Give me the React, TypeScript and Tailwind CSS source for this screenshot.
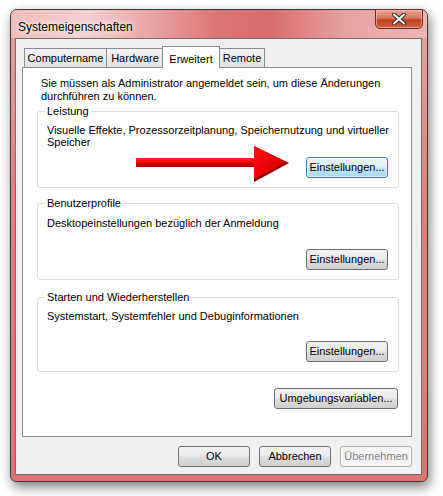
import type { ReactNode } from "react"

const font = { fontFamily: '"Liberation Sans", Arial, sans-serif' }

function Btn({ children, w, focused, disabled }: { children: ReactNode; w: string; focused?: boolean; disabled?: boolean }) {
  let cls = "border-[#707070] bg-[linear-gradient(#f2f2f2_0%,#ebebeb_48%,#dddddd_52%,#cfcfcf_100%)] text-black"
  if (focused) cls = "border-[#3c7fb1] bg-[linear-gradient(#eaf6fd_0%,#d9f0fc_48%,#bee6fd_52%,#a7d9f5_100%)] text-black shadow-[inset_0_0_0_1px_rgba(255,255,255,0.6)]"
  if (disabled) cls = "border-[#adb2b5] bg-[#f4f4f4] text-[#838383]"
  return (
    <div className={`${w} h-[21px] flex items-center justify-center whitespace-nowrap rounded-[3px] border ${cls}`}>
      {children}
    </div>
  )
}

function Group({ label, h, pt, children }: { label: string; h: string; pt: string; children: ReactNode }) {
  return (
    <div className={`relative w-[362px] ${h} rounded-[3px] border border-[#d5dfe5] flex flex-col pl-[9px] pr-[10px] pb-[9px] ${pt}`}>
      <span className="absolute left-[7px] -top-[7px] px-[2px] bg-white leading-[12px] whitespace-nowrap">{label}</span>
      {children}
    </div>
  )
}

function Arrow() {
  return (
    <svg className="absolute left-[99px] top-[35px]" width="154" height="37" viewBox="0 0 154 37">
      <defs>
        <linearGradient id="shaft" x1="0" y1="0" x2="0" y2="1">
          <stop offset="0" stopColor="#ff3030" />
          <stop offset="0.5" stopColor="#ee0000" />
          <stop offset="1" stopColor="#9a0000" />
        </linearGradient>
        <linearGradient id="head" x1="0" y1="0" x2="1" y2="1">
          <stop offset="0" stopColor="#ff1010" />
          <stop offset="0.6" stopColor="#e40000" />
          <stop offset="1" stopColor="#8c0000" />
        </linearGradient>
      </defs>
      <rect x="0" y="12" width="120" height="9" fill="url(#shaft)" />
      <polygon points="118,0 153,17 118,36" fill="#8a0000" />
      <polygon points="118,0 151,16.5 118,33" fill="url(#head)" />
    </svg>
  )
}

const tab = "h-[19px] border border-b-0 border-[#898c95] bg-[linear-gradient(#f2f2f2,#e3e3e3)] flex items-center justify-center"

export default function App() {
  return (
    <div className="w-[443px] h-[496px] bg-white pl-[10px] pt-[9px] text-[11px] text-black" style={font}>
      <div className="w-[418px] h-[473px] flex flex-col rounded-t-[7px] rounded-b-[6px] border border-[#3a3a3a] bg-[linear-gradient(#e9a3a3,#e08080_40%,#dd7474)] shadow-[2px_5px_12px_rgba(0,0,0,0.5)]">
        <div className="h-[28px] flex rounded-t-[6px] bg-[linear-gradient(90deg,#efbcbc_0%,#f4d0d0_18%,#eaa9a9_32%,#dc7474_50%,#d96c6c_62%,#e6a0a0_80%,#eeb6b6_100%)]">
          <span className="pl-[7px] pt-[8px] flex-1 text-[12px] text-black [text-shadow:0_0_8px_#fff,0_0_4px_#fff]">Systemeigenschaften</span>
          <div className="mr-[4px] -mt-px w-[48px] h-[20px] rounded-b-[5px] border border-[#6b2a22] bg-[linear-gradient(#eaa292_0%,#d77a63_45%,#c33f22_55%,#d0603d_100%)] shadow-[inset_0_0_0_1px_rgba(255,220,210,0.5)] flex items-center justify-center">
            <svg width="14" height="12" viewBox="0 0 14 12">
              <path d="M2 1.5L12 10.5M12 1.5L2 10.5" stroke="#3b2a2a" strokeWidth="4" strokeLinecap="round" />
              <path d="M2 1.5L12 10.5M12 1.5L2 10.5" stroke="#ffffff" strokeWidth="2" strokeLinecap="round" />
            </svg>
          </div>
        </div>
        <div className="ml-[4px] w-[407px] h-[437px] border border-[#6e6e6e] bg-[#f0f0f0] flex flex-col">
          <div className="ml-[8px] mt-[7px] h-[21px] flex items-end relative z-10 whitespace-nowrap">
            <div className={`w-[83px] ${tab}`}>Computername</div>
            <div className={`-ml-px w-[58px] ${tab}`}>Hardware</div>
            <div className="-ml-[2px] w-[58px] h-[22px] -mb-px border border-b-0 border-[#898c95] bg-white flex items-start justify-center pt-[4px] relative z-10">Erweitert</div>
            <div className={`-ml-px w-[46px] ${tab}`}>Remote</div>
          </div>
          <div className="ml-[6px] w-[390px] h-[370px] border border-[#898c95] bg-white flex flex-col pl-[14px] pt-[9px]">
            <p className="ml-[4px] leading-[13px] whitespace-nowrap">
              Sie müssen als Administrator angemeldet sein, um diese Änderungen<br />durchführen zu können.
            </p>
            <div className="mt-[8px] relative">
              <Group label="Leistung" h="h-[77px]" pt="pt-[12px]">
                <p className="leading-[12px] whitespace-nowrap">Visuelle Effekte, Prozessorzeitplanung, Speichernutzung und virtueller<br />Speicher</p>
                <div className="mt-auto self-end"><Btn w="w-[82px]" focused>Einstellungen...</Btn></div>
              </Group>
              <Arrow />
            </div>
            <div className="mt-[15px]">
              <Group label="Benutzerprofile" h="h-[77px]" pt="pt-[13px]">
                <p className="leading-[12px]">Desktopeinstellungen bezüglich der Anmeldung</p>
                <div className="mt-auto self-end"><Btn w="w-[82px]">Einstellungen...</Btn></div>
              </Group>
            </div>
            <div className="mt-[17px]">
              <Group label="Starten und Wiederherstellen" h="h-[75px]" pt="pt-[12px]">
                <p className="leading-[12px]">Systemstart, Systemfehler und Debuginformationen</p>
                <div className="mt-auto self-end"><Btn w="w-[82px]">Einstellungen...</Btn></div>
              </Group>
            </div>
            <div className="mt-[16px] w-[361px] flex justify-end">
              <Btn w="w-[124px]">Umgebungsvariablen...</Btn>
            </div>
          </div>
          <div className="mt-[9px] ml-[162px] flex gap-[9px]">
            <Btn w="w-[72px]">OK</Btn>
            <Btn w="w-[72px]">Abbrechen</Btn>
            <Btn w="w-[72px]" disabled>Übernehmen</Btn>
          </div>
        </div>
      </div>
    </div>
  )
}
